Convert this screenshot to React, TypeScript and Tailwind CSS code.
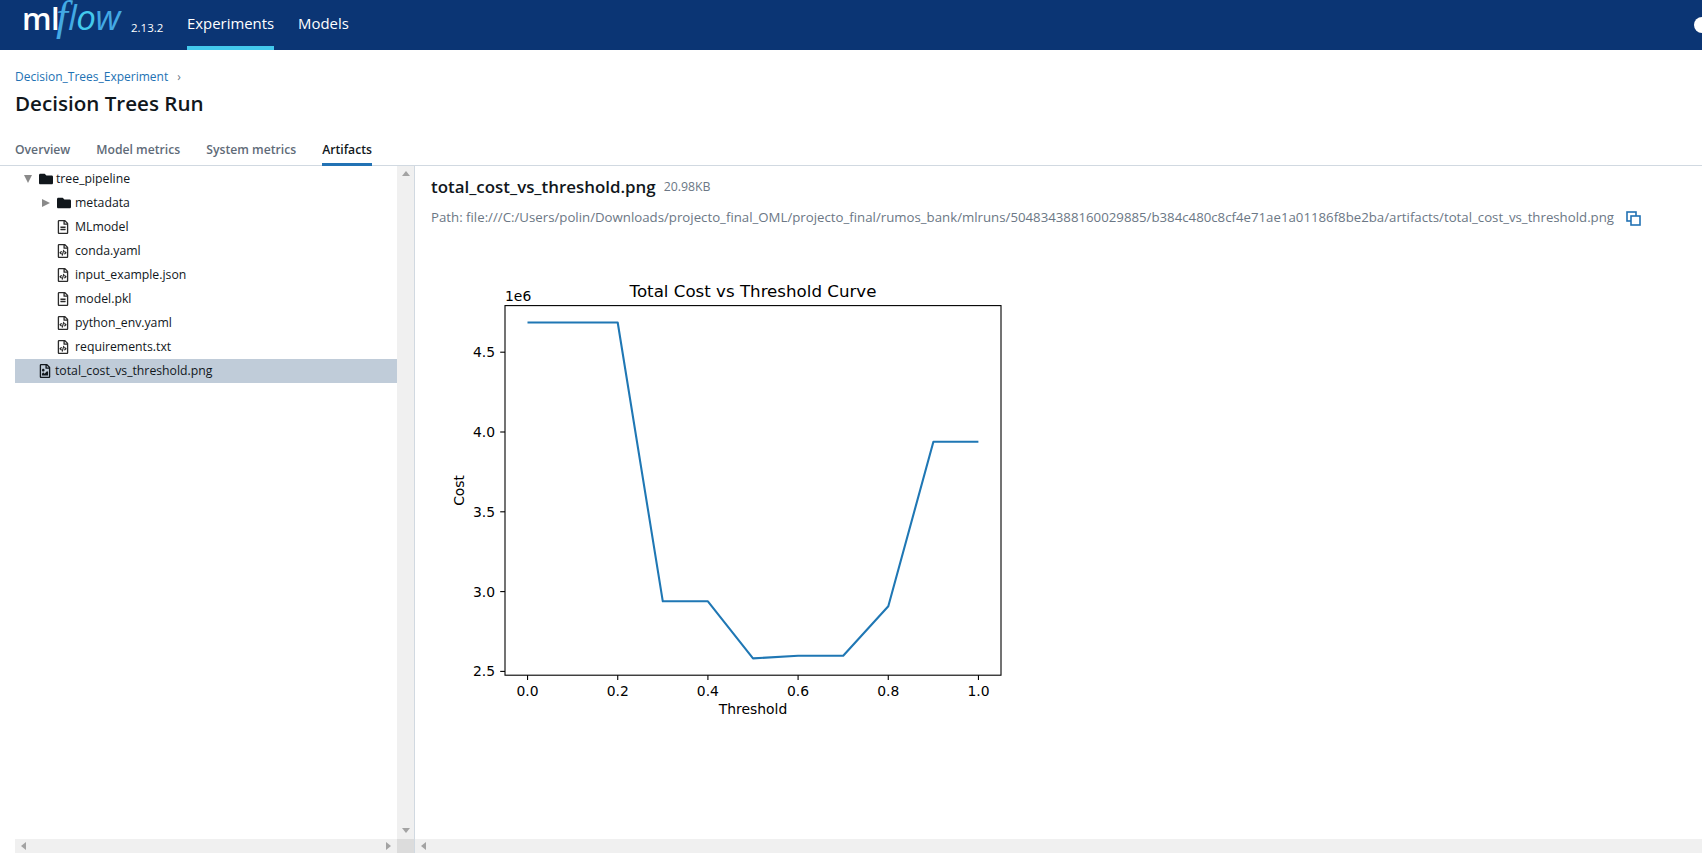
// MLflow run page, artifacts tab
import React from 'react';
import { FaFolder, FaRegFileAlt, FaRegFileCode, FaRegFileImage } from 'react-icons/fa';

const Caret = ({ open }: { open?: boolean }) => (
  <svg width="10" height="10" viewBox="0 0 10 10" className="shrink-0" fill="#8a8a8a">
    {open ? <path d="M1 1h8L5 9z" /> : <path d="M1 1v8l8-4z" />}
  </svg>
);

const Arrow = ({ dir }: { dir: 'up' | 'down' | 'left' | 'right' }) => {
  const d = { up: 'M4 1l4 5H0z', down: 'M0 1h8L4 6z', left: 'M6 0v8L1 4z', right: 'M2 0v8l5-4z' }[dir];
  return (
    <svg width="8" height="8" viewBox="0 0 8 8" fill="#a3a3a3">
      <path d={d} />
    </svg>
  );
};

const FileRow = ({ name, code }: { name: string; code?: boolean }) => (
  <div className="flex h-6 items-center pl-[41px] text-[12.25px] text-[#11171c]">
    {code ? <FaRegFileCode size={14} className="shrink-0 text-[#2b2b2b]" /> : <FaRegFileAlt size={14} className="shrink-0 text-[#2b2b2b]" />}
    <span className="ml-[5px]">{name}</span>
  </div>
);

const Logo = () => (
  <svg width="143" height="50" viewBox="0 0 143 50" className="ml-[22px] mr-[22px] shrink-0" fontFamily="'Open Sans', sans-serif">
    <text x="0" y="30" fontSize="31" fontWeight="600" letterSpacing="-0.5" fill="#fff">ml</text>
    <text x="34" y="30" fontSize="43" fontStyle="italic" fontFamily="'Liberation Serif', serif" fill="#43a9e4">f</text>
    <text x="46" y="30" fontSize="35" fontStyle="italic" letterSpacing="-0.5" fill="#43a9e4">
      l<tspan fill="#43c9ed">o</tspan>w
    </text>
    <text x="109" y="32" fontSize="11.5" fill="#fff">2.13.2</text>
  </svg>
);

const ThresholdChart = () => {
  const pts = [
    [0, 74.5], [0.1, 74.5], [0.2, 74.5], [0.3, 353.3], [0.4, 353.3], [0.5, 410.4],
    [0.6, 407.7], [0.7, 407.7], [0.8, 358.3], [0.9, 193.7], [1, 193.7],
  ];
  const line = pts.map(([t, y]) => `${(102.55 + t * 450.9).toFixed(1)},${y}`).join(' ');
  const xTicks = [0, 0.2, 0.4, 0.6, 0.8, 1];
  const yTicks = [[4.5, 104.2], [4, 184], [3.5, 263.8], [3, 343.6], [2.5, 423.4]];
  return (
    <svg width="640" height="480" viewBox="0 0 640 480" className="block" fontFamily="'DejaVu Sans', sans-serif" fontSize="13.9" fill="#000">
      <text x="328" y="49" fontSize="16.67" textAnchor="middle">Total Cost vs Threshold Curve</text>
      <text x="80" y="52.5">1e6</text>
      <rect x="80" y="57.6" width="496" height="369.6" fill="none" stroke="#000" strokeWidth="1.1" />
      <polyline points={line} fill="none" stroke="#1f77b4" strokeWidth="2.08" strokeLinejoin="round" />
      {xTicks.map((t) => {
        const x = 102.55 + t * 450.9;
        return (
          <g key={t}>
            <line x1={x} x2={x} y1="427.2" y2="432" stroke="#000" strokeWidth="1.1" />
            <text x={x} y="447.5" textAnchor="middle">{t.toFixed(1)}</text>
          </g>
        );
      })}
      {yTicks.map(([v, y]) => (
        <g key={v}>
          <line x1="75.2" x2="80" y1={y} y2={y} stroke="#000" strokeWidth="1.1" />
          <text x="70" y={y + 5} textAnchor="end">{v.toFixed(1)}</text>
        </g>
      ))}
      <text x="328" y="466" textAnchor="middle">Threshold</text>
      <text transform="translate(39 242.4) rotate(-90)" textAnchor="middle">Cost</text>
    </svg>
  );
};

export default function App() {
  return (
    <div className="flex h-[853px] w-[1702px] flex-col overflow-hidden bg-white font-['Open_Sans',sans-serif] text-[#11171c]">
      <header className="flex h-[50px] shrink-0 items-center overflow-hidden bg-[#0b3574] text-white">
        <Logo />
        <nav className="flex h-full text-[14.9px]">
          <a className="flex h-full items-center border-b-4 border-[#43c9ed]">Experiments</a>
          <a className="ml-6 flex h-full items-center border-b-4 border-transparent">Models</a>
        </nav>
        <div className="-mr-2 ml-auto h-4 w-4 shrink-0 rounded-full bg-white" />
      </header>

      <div className="shrink-0 pl-[15px]">
        <div className="mt-[18px] flex h-[18px] items-center text-[12px] text-[#2272b4]">
          Decision_Trees_Experiment
          <span className="ml-[9px] text-[#6b7785]">›</span>
        </div>
        <h1 className="mt-[3px] h-[28px] text-[20.6px] leading-[28px] font-semibold">Decision Trees Run</h1>
      </div>

      <div className="mt-[24px] flex h-[25px] shrink-0 gap-[26px] border-b border-[#d1d9e1] pl-[15px] text-[12.2px] font-semibold text-[#5f6b78]">
        <span>Overview</span>
        <span>Model metrics</span>
        <span>System metrics</span>
        <span className="h-[25px] border-b-[3px] border-[#2272b4] text-[#11171c]">Artifacts</span>
      </div>

      <div className="flex min-h-0 flex-1">
        <aside className="flex w-[415px] shrink-0 flex-col border-r border-[#d1d9e1]">
          <div className="flex min-h-0 flex-1">
            <div className="min-w-0 flex-1 pl-[15px] pt-[1px]">
              <div className="flex h-6 items-center pl-[8px] text-[12.25px]">
                <Caret open />
                <FaFolder size={14} className="ml-[6px] shrink-0 text-[#11171c]" />
                <span className="ml-[3px]">tree_pipeline</span>
              </div>
              <div className="flex h-6 items-center pl-[26px] text-[12.25px]">
                <Caret />
                <FaFolder size={14} className="ml-[6px] shrink-0 text-[#11171c]" />
                <span className="ml-[4px]">metadata</span>
              </div>
              <FileRow name="MLmodel" />
              <FileRow name="conda.yaml" code />
              <FileRow name="input_example.json" code />
              <FileRow name="model.pkl" />
              <FileRow name="python_env.yaml" code />
              <FileRow name="requirements.txt" code />
              <div className="flex h-6 items-center bg-[#c0ccd9] pl-[23px] text-[12.25px]">
                <FaRegFileImage size={14} className="shrink-0 text-[#11171c]" />
                <span className="ml-[3px]">total_cost_vs_threshold.png</span>
              </div>
            </div>
            <div className="flex w-[17px] shrink-0 flex-col items-center justify-between bg-[#f0f0f0] py-[4px]">
              <Arrow dir="up" />
              <Arrow dir="down" />
            </div>
          </div>
          <div className="flex h-[14px] shrink-0 pl-[15px]">
            <div className="flex flex-1 items-center justify-between bg-[#f0f0f0] px-[5px]">
              <Arrow dir="left" />
              <Arrow dir="right" />
            </div>
            <div className="w-[17px] bg-[#dcdcdc]" />
          </div>
        </aside>

        <main className="flex min-w-0 flex-1 flex-col">
          <div className="min-h-0 flex-1 overflow-hidden pl-[16px]">
            <div className="mt-[10px] flex h-[22px] items-center">
              <span className="text-[16.9px] font-semibold">total_cost_vs_threshold.png</span>
              <span className="ml-2 text-[12.3px] text-[#6b7785]">20.98KB</span>
            </div>
            <div className="mt-[10px] flex h-5 items-center whitespace-nowrap text-[13.24px] text-[#6b7785]">
              Path: file:///C:/Users/polin/Downloads/projecto_final_OML/projecto_final/rumos_bank/mlruns/504834388160029885/b384c480c8cf4e71ae1a01186f8be2ba/artifacts/total_cost_vs_threshold.png
              <svg width="15" height="15" viewBox="0 0 15 15" className="ml-[12px] shrink-0" fill="none" stroke="#2272b4" strokeWidth="1.6">
                <rect x="1" y="1" width="9" height="9" />
                <rect x="5" y="5" width="9" height="9" fill="#fff" />
              </svg>
            </div>
            <div className="mt-[20px] -ml-[6px]">
              <ThresholdChart />
            </div>
          </div>
          <div className="flex h-[14px] shrink-0 items-center bg-[#f0f0f0] px-[5px]">
            <Arrow dir="left" />
          </div>
        </main>
      </div>
    </div>
  );
}
